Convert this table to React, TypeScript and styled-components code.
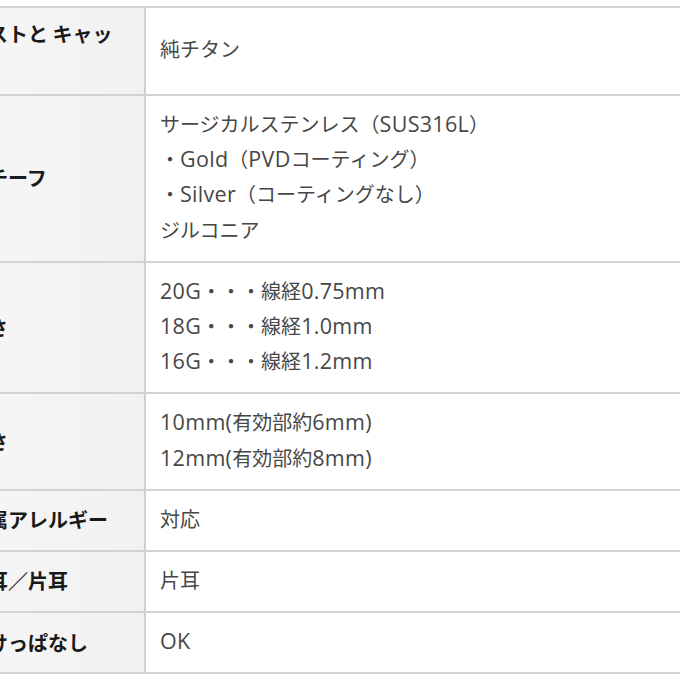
import styled, { createGlobalStyle } from "styled-components";

const GlobalStyle = createGlobalStyle`
  html, body {
    margin: 0;
    padding: 0;
    background: #fff;
  }
  body {
    font-family: "Noto Sans CJK JP", "Noto Sans", sans-serif;
  }
`;

type Spec = { label: string; values: string[] };

const specs: Spec[] = [
  { label: "ポストと キャッチ", values: ["純チタン"] },
  {
    label: "モチーフ",
    values: [
      "サージカルステンレス（SUS316L）",
      "・Gold（PVDコーティング）",
      "・Silver（コーティングなし）",
      "ジルコニア",
    ],
  },
  {
    label: "太さ",
    values: ["20G・・・線経0.75mm", "18G・・・線経1.0mm", "16G・・・線経1.2mm"],
  },
  { label: "長さ", values: ["10mm(有効部約6mm)", "12mm(有効部約8mm)"] },
  { label: "金属アレルギー", values: ["対応"] },
  { label: "両耳／片耳", values: ["片耳"] },
  { label: "つけっぱなし", values: ["OK"] },
];

// latin runs get their own span: the original font draws them wider than the kana
const renderLine = (text: string) =>
  text.split(/([A-Za-z0-9.()]+)/).map((part, i) =>
    /[A-Za-z0-9]/.test(part) ? <Latin key={i}>{part}</Latin> : part
  );

const App = () => {
  return (
    <>
      <GlobalStyle />
      <Frame>
        <SpecTable>
          <colgroup>
            <col style={{ width: 198 }} />
            <col />
          </colgroup>
          <tbody>
            {specs.map((s) => (
              <tr key={s.label}>
                <Label>{s.label}</Label>
                <Value>
                  {s.values.map((v) => (
                    <Line key={v}>{renderLine(v)}</Line>
                  ))}
                </Value>
              </tr>
            ))}
          </tbody>
        </SpecTable>
      </Frame>
    </>
  );
};

export default App;

const Frame = styled.div`
  width: 680px;
  height: 680px;
  overflow: hidden;
  padding-top: 6px;
  box-sizing: border-box;
`;

const SpecTable = styled.table`
  margin-left: -53px;
  width: 820px;
  table-layout: fixed;
  border-collapse: collapse;
  border-top: 2px solid #d2d2d2;
  border-bottom: 2px solid #d2d2d2;
`;

const Label = styled.th`
  background: linear-gradient(90deg, #f7f7f7, #f1f1f1);
  color: #1a1a1a;
  font-weight: 700;
  font-size: 20px;
  line-height: 34px;
  text-align: left;
  vertical-align: middle;
  padding: 9px 20px 9px 21px;
  border-right: 2px solid #cfcfcf;
  border-bottom: 2px solid #d2d2d2;
`;

const Value = styled.td`
  background: #fff;
  color: #474747;
  font-size: 20px;
  line-height: 35px;
  vertical-align: middle;
  padding: 10px 14px 14px;
  border-bottom: 2px solid #d2d2d2;
`;

const Line = styled.div`
  white-space: nowrap;
  height: 35.2px;
`;

const Latin = styled.span`
  font-family: "Open Sans", "Noto Sans", sans-serif;
  font-size: 21.5px;
  line-height: 1;
  letter-spacing: 0.3px;
`;
